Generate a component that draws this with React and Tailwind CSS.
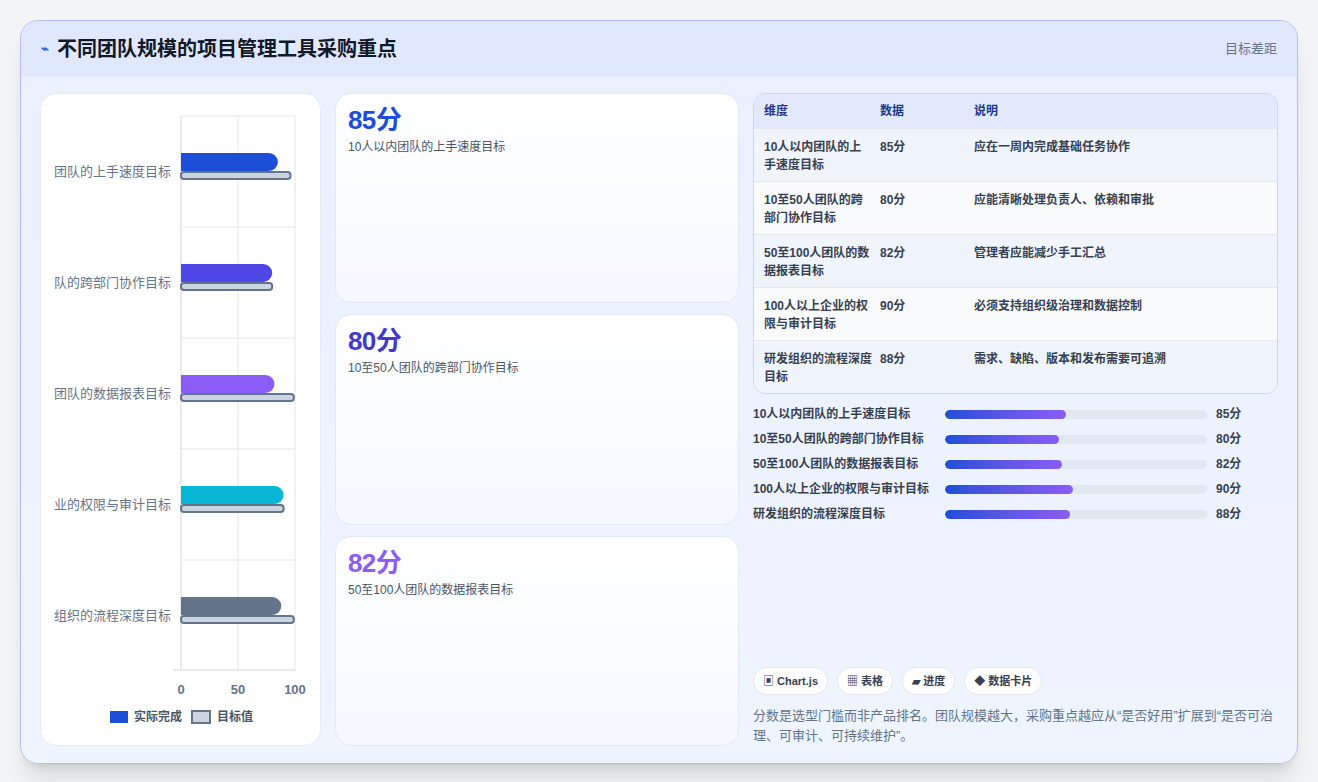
const F = { fontFamily: '"Liberation Sans","Noto Sans CJK SC",sans-serif' };
const rows = [
  ["10人以内团队的上手速度目标", 85, "应在一周内完成基础任务协作", "团队的上手速度目标", "#1d4ed8", 96],
  ["10至50人团队的跨部门协作目标", 80, "应能清晰处理负责人、依赖和审批", "队的跨部门协作目标", "#4f46e5", 80],
  ["50至100人团队的数据报表目标", 82, "管理者应能减少手工汇总", "团队的数据报表目标", "#8b5cf6", 99],
  ["100人以上企业的权限与审计目标", 90, "必须支持组织级治理和数据控制", "业的权限与审计目标", "#06b6d4", 90],
  ["研发组织的流程深度目标", 88, "需求、缺陷、版本和发布需要可追溯", "组织的流程深度目标", "#64748b", 99],
];
const tableNames = [["10人以内团队的上","手速度目标"],["10至50人团队的跨","部门协作目标"],["50至100人团队的数","据报表目标"],["100人以上企业的权","限与审计目标"],["研发组织的流程深度","目标"]];

function Chart() {
  const x0 = 140, w = 114, top = 22, bh = 111;
  return (
    <svg width="280" height="651" className="block">
      {[0, 50, 100].map((v) => (
        <line key={v} x1={x0 + v * w / 100} x2={x0 + v * w / 100} y1={top} y2={576} stroke={v === 0 ? "#d1d5db" : "#e5e7eb"} />
      ))}
      <line x1={x0} x2={x0 + w} y1={top} y2={top} stroke="#e5e7eb" />
      {[1, 2, 3, 4].map((i) => <line key={i} x1={x0} x2={x0 + w} y1={top + i * bh} y2={top + i * bh} stroke="#e5e7eb" />)}
      <line x1={x0 - 8} x2={x0 + w} y1={576} y2={576} stroke="#d1d5db" />
      {rows.map((r, i) => {
        const cy = top + i * bh + 55;
        const aw = r[1] * w / 100, tw = r[5] * w / 100;
        return (
          <g key={i}>
            <text x={130} y={cy + 5} textAnchor="end" fontSize="13" fill="#64748b" style={F}>{r[3]}</text>
            <path d={`M${x0} ${cy - 18} H${x0 + aw - 9} a9 9 0 0 1 0 18 H${x0} Z`} fill={r[4]} />
            <rect x={x0} y={cy + 1} width={tw} height={7} rx={3} fill="#cbd5e1" stroke="#64748b" strokeWidth="2" />
          </g>
        );
      })}
      {[0, 50, 100].map((v) => (
        <text key={v} x={x0 + v * w / 100} y={600} textAnchor="middle" fontSize="13" fontWeight="bold" fill="#64748b" style={F}>{v}</text>
      ))}
      <rect x={69} y={617} width={18} height={12} fill="#1d4ed8" />
      <text x={93} y={627} fontSize="12" fontWeight="bold" fill="#4b5563" style={F}>实际完成</text>
      <rect x={151} y={617} width={18} height={12} fill="#cbd5e1" stroke="#64748b" strokeWidth="2" />
      <text x={176} y={627} fontSize="12" fontWeight="bold" fill="#4b5563" style={F}>目标值</text>
    </svg>
  );
}

export default function App() {
  return (
    <div style={F} className="w-[1318px] h-[782px] bg-[#f3f4f6] pt-[20px] pl-[20px]">
      <div className="w-[1278px] h-[744px] rounded-[18px] border border-[#b4bff0] overflow-hidden shadow-xl bg-gradient-to-b from-[#eaf0fd] to-[#eef5ff] flex flex-col">
        <div className="h-[56px] shrink-0 bg-[#e0e8fd] flex items-center justify-between px-[20px]">
          <div className="flex items-center gap-[8px]">
            <span className="text-[#2563eb] text-[13px] font-bold">⌁</span>
            <span className="text-[20px] font-bold text-[#111827]">不同团队规模的项目管理工具采购重点</span>
          </div>
          <span className="text-[13px] text-[#64748b]">目标差距</span>
        </div>
        <div className="flex gap-[14px] px-[19px] pt-[16px] pb-[19px] flex-1">
          <div className="w-[281px] bg-white rounded-[16px] border border-[#e5eaf5] overflow-hidden">
            <Chart />
          </div>
          <div className="w-[404px] flex flex-col gap-[11px]">
            {[[85, "10人以内团队的上手速度目标", "text-[#1d4ed8]"], [80, "10至50人团队的跨部门协作目标", "text-[#4338ca]"], [82, "50至100人团队的数据报表目标", "text-[#8b5cf6]"]].map(([v, t, c]) => (
              <div key={v} className="flex-1 rounded-[16px] border border-[#e2e8f5] bg-gradient-to-b from-white to-[#f5f8ff] px-[12px] pt-[10px]">
                <div className={`text-[26px] font-bold leading-[32px] tracking-tight ${c}`}>{v}分</div>
                <div className="text-[12px] text-[#4b5563] mt-[2px]">{t}</div>
              </div>
            ))}
          </div>
          <div className="flex-1 flex flex-col">
            <div className="rounded-[12px] border border-[#cfd8ea] overflow-hidden text-[12px]">
              <div className="h-[34px] bg-[#e2e9fd] flex items-center font-bold text-[#1e3a8a]">
                <div className="w-[126px] pl-[10px]">维度</div><div className="w-[94px]">数据</div><div>说明</div>
              </div>
              {rows.map((r, i) => (
                <div key={i} className={`h-[53px] flex pt-[9px] border-t border-[#e5e7eb] font-bold text-[#374151] leading-[18px] ${i % 2 ? "bg-[#f8fafc]" : "bg-[#eff4fd]"}`}>
                  <div className="w-[126px] pl-[10px]">{tableNames[i][0]}<br />{tableNames[i][1]}</div>
                  <div className="w-[94px]">{r[1]}分</div>
                  <div>{r[2]}</div>
                </div>
              ))}
            </div>
            <div className="mt-[12px] flex flex-col gap-[9px]">
              {rows.map((r, i) => (
                <div key={i} className="h-[16px] flex items-center text-[12px] font-bold text-[#374151]">
                  <div className="w-[192px]">{r[0]}</div>
                  <div className="w-[262px] h-[9px] rounded-full bg-[#e2e8f0] overflow-hidden">
                    <div className="h-full rounded-full bg-gradient-to-r from-[#1d4ed8] to-[#8b5cf6]" style={{ width: r[1] * 1.425 + "px" }} />
                  </div>
                  <div className="ml-[9px]">{r[1]}分</div>
                </div>
              ))}
            </div>
            <div className="flex-1" />
            <div className="flex gap-[9px] text-[11px] font-bold text-[#374151]">
              {["▣ Chart.js", "▦ 表格", "▰ 进度", "◆ 数据卡片"].map((c) => (
                <span key={c} className="h-[28px] px-[9px] rounded-full bg-white border border-[#e5e7eb] flex items-center">{c}</span>
              ))}
            </div>
            <p className="mt-[11px] text-[13px] leading-[20px] text-[#64748b]">分数是选型门槛而非产品排名。团队规模越大，采购重点越应从“是否好用”扩展到“是否可治理、可审计、可持续维护”。</p>
          </div>
        </div>
      </div>
    </div>
  );
}
